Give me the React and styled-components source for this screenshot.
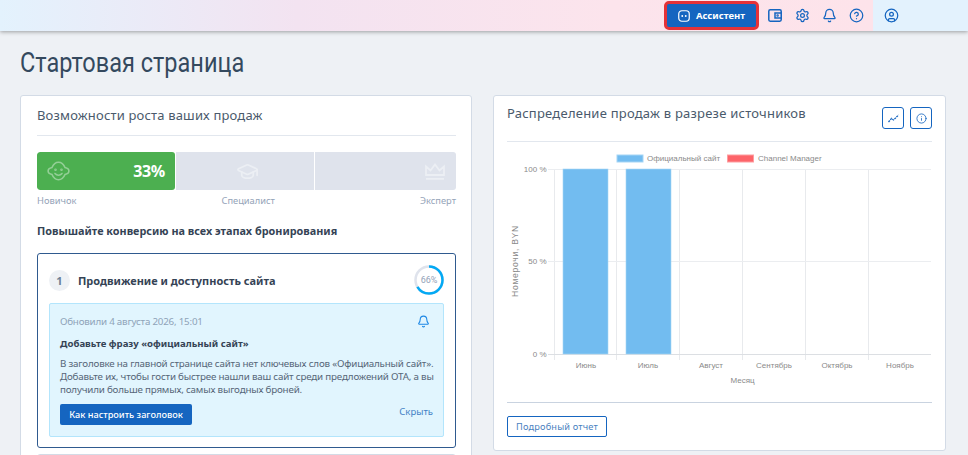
import React from 'react';
import styled, { createGlobalStyle } from 'styled-components';
import { Settings, Bell, CircleHelp, CircleUser, GraduationCap, Info } from 'lucide-react';

const Global = createGlobalStyle`
  html, body {
    margin: 0;
    height: 100%;
    overflow: hidden;
    background: #eef1f5;
    font-family: "Noto Sans", "Open Sans", sans-serif;
  }
  * { box-sizing: border-box; }
`;

const Page = styled.div`
  height: 455px;
  overflow: hidden;
`;

const Topbar = styled.header`
  display: flex;
  height: 31px;
  box-shadow: 0 1px 4px rgba(0, 0, 0, .35);
  position: relative;
`;

const TopMain = styled.div`
  flex: 1;
  display: flex;
  align-items: center;
  justify-content: flex-end;
  gap: 7px;
  padding-right: 7px;
  background: linear-gradient(90deg, #e3f2fd 0%, #f3e3f1 34%, #fce4ec 70%, #fde3ea 100%);
`;

const TopProfile = styled.div`
  width: 95px;
  display: flex;
  align-items: center;
  padding-left: 11px;
  color: #1565c0;
  background: #e3f2fd;
`;

const AssistantBtn = styled.button`
  width: 95px;
  height: 29px;
  margin-right: -1px;
  border: 3px solid #e53238;
  border-radius: 5px;
  background: #1565c0;
  color: #fff;
  font: 700 9.5px "Noto Sans", sans-serif;
  display: flex;
  align-items: center;
  justify-content: center;
  gap: 6px;
  padding: 0;
`;

const TopIcon = styled.span`
  width: 20px;
  height: 20px;
  display: flex;
  align-items: center;
  justify-content: center;
  color: #1565c0;
`;

const Title = styled.h1`
  margin: 14px 0 0 20px;
  height: 36px;
  font: 400 28px/36px Roboto, sans-serif;
  color: #34495e;
  transform: scaleX(.84);
  transform-origin: left;
`;

const Columns = styled.main`
  display: grid;
  grid-template-columns: 452px 453px;
  gap: 21px;
  padding: 14px 0 0 20px;
  align-items: start;
`;

const Card = styled.section`
  background: #fff;
  border: 1px solid #d3dbe6;
  border-radius: 3px;
`;

const LeftCard = styled(Card)`
  height: 400px;
  padding: 0 15px 0 16px;
  overflow: hidden;
`;

const RightCard = styled(Card)`
  height: 356px;
  padding: 0 13px;
`;

const LeftHead = styled.div`
  height: 40px;
  border-bottom: 1px solid #e2e7ee;
  font-size: 13px;
  line-height: 39px;
  letter-spacing: .17px;
  color: #4a5a6c;
`;

const LevelBar = styled.div`
  display: flex;
  gap: 1px;
  height: 38px;
  margin-top: 16px;
  border-radius: 3px;
  overflow: hidden;
`;

const Level = styled.div`
  width: ${p => p.$w}px;
  flex: ${p => (p.$w ? 'none' : 1)};
  display: flex;
  align-items: center;
  justify-content: ${p => p.$justify || 'center'};
  padding: ${p => p.$pad || 0};
  background: ${p => (p.$active ? '#4caf50' : '#dfe3ec')};
  border-radius: ${p => (p.$active ? '3px' : 0)};
  color: ${p => (p.$active ? 'rgba(255,255,255,.4)' : '#eceff4')};
`;

const Percent = styled.span`
  font-size: 16px;
  font-weight: 700;
  color: #fff;
  letter-spacing: -.3px;
`;

const LevelLabels = styled.div`
  display: flex;
  justify-content: space-between;
  margin-top: 4px;
  font-size: 9.3px;
  line-height: 14px;
  color: #94a3b8;
`;

const Lead = styled.h3`
  margin: 15px 0 0;
  font-size: 10.85px;
  font-weight: 700;
  line-height: 16px;
  color: #354355;
`;

const Step = styled.article`
  margin-top: 14px;
  height: 195px;
  border: 1px solid #2f5a8f;
  border-radius: 3px;
  padding: 0 11px;
`;

const StepHead = styled.div`
  display: flex;
  align-items: center;
  height: 49px;
  padding-top: 3px;
`;

const StepNum = styled.span`
  width: 21px;
  height: 21px;
  border-radius: 50%;
  background: #eef1f5;
  color: #6d8196;
  font-size: 11px;
  font-weight: 700;
  display: flex;
  align-items: center;
  justify-content: center;
  margin-right: 8px;
`;

const StepTitle = styled.span`
  flex: 1;
  font-size: 10.97px;
  font-weight: 700;
  color: #354355;
`;

const Ring = styled.svg`
  display: block;
  margin-right: -1px;
`;

const Alert = styled.div`
  height: 134px;
  background: #e1f5fe;
  border: 1px solid #b3e5fc;
  border-radius: 2px;
  padding: 9px 10px 0;
`;

const AlertTop = styled.div`
  display: flex;
  justify-content: space-between;
  align-items: center;
  height: 16px;
  padding-right: 3px;
  color: #1e88e5;
`;

const AlertDate = styled.span`
  font-size: 9.8px;
  letter-spacing: -.22px;
  color: #8fa3b8;
`;

const AlertTitle = styled.h4`
  margin: 8px 0 0;
  font-size: 9.6px;
  font-weight: 700;
  line-height: 14px;
  color: #354355;
`;

const AlertText = styled.p`
  margin: 6px 0 0;
  font-size: 9.8px;
  letter-spacing: -.2px;
  line-height: 13px;
  color: #566678;
  white-space: nowrap;
`;

const AlertFoot = styled.div`
  display: flex;
  justify-content: space-between;
  align-items: flex-start;
  margin-top: 8px;
`;

const PrimaryBtn = styled.button`
  width: 132px;
  height: 21px;
  border: 0;
  border-radius: 2px;
  background: #1565c0;
  color: #fff;
  font: 500 9.2px "Noto Sans", sans-serif;
  padding: 0;
`;

const HideLink = styled.a`
  font-size: 9.5px;
  line-height: 16px;
  color: #3f7fc4;
`;

const NextStep = styled.div`
  margin-top: 6px;
  height: 20px;
  border: 1px solid #d3dbe6;
  border-radius: 3px;
`;

const RightHead = styled.div`
  display: flex;
  justify-content: space-between;
  height: 46px;
  border-bottom: 1px solid #e2e7ee;
`;

const RightTitle = styled.h2`
  margin: 8px 0 0;
  font-size: 13px;
  font-weight: 400;
  line-height: 18px;
  letter-spacing: .23px;
  color: #4a5a6c;
`;

const HeadActions = styled.div`
  display: flex;
  gap: 6px;
  padding-top: 11px;
`;

const IconBtn = styled.button`
  width: 22px;
  height: 22px;
  padding: 0;
  border: 1px solid #1565c0;
  border-radius: 3px;
  background: #fff;
  color: #1565c0;
  display: flex;
  align-items: center;
  justify-content: center;
`;

const Chart = styled.svg`
  display: block;
  width: 425px;
  height: 260px;
  text {
    font-family: "Liberation Sans", Arial, sans-serif;
    font-size: 8px;
    fill: #8a8a8a;
  }
`;

const AxisName = styled.text`
  font-size: 8.6px !important;
  letter-spacing: .7px;
`;

const ChartFoot = styled.div`
  border-top: 1px solid #c9d3e0;
  padding-top: 13px;
`;

const OutlineBtn = styled.button`
  display: block;
  width: 100px;
  height: 21px;
  padding: 0;
  border: 1px solid #1565c0;
  border-radius: 2px;
  background: #fff;
  color: #4a7fc0;
  font: 400 9.2px "Noto Sans", sans-serif;
  letter-spacing: .17px;
`;

const WalletIcon = () => (
  <svg width="14" height="13" viewBox="0 0 14 13" fill="none" stroke="currentColor" strokeWidth="1.5">
    <rect x=".8" y=".8" width="12.4" height="11.4" rx="1.4" />
    <rect x="7" y="4" width="6.2" height="5" fill="#fde3ea" />
    <circle cx="9.6" cy="6.5" r=".5" />
  </svg>
);

const BotIcon = () => (
  <svg width="12" height="12" viewBox="0 0 13 13" fill="none">
    <rect x=".8" y=".8" width="11.4" height="11.4" rx="3.4" stroke="#fff" strokeWidth="1.3" />
    <circle cx="4.6" cy="6.5" r="1" fill="#fff" />
    <circle cx="8.4" cy="6.5" r="1" fill="#fff" />
  </svg>
);

const BabyIcon = () => (
  <svg width="23" height="20" viewBox="0 0 23 20" fill="none" stroke="currentColor" strokeWidth="1.6" strokeLinecap="round">
    <path d="M5 6.5C6.4 3.2 8.8 1.3 11.5 1.3S16.6 3.2 18 6.5c2.1.5 3.9 1.8 3.9 3.5S20.1 13 18 13.5c-1.4 3.3-3.8 5.2-6.5 5.2S6.4 16.8 5 13.5C2.9 13 1.1 11.7 1.1 10S2.9 7 5 6.5Z" />
    <path d="M8 12.5c1.8 2.3 5.2 2.3 7 0" />
    <circle cx="8.5" cy="8.8" r=".5" />
    <circle cx="14.5" cy="8.8" r=".5" />
  </svg>
);

const CrownIcon = () => (
  <svg width="20" height="17" viewBox="0 0 20 17" fill="none" stroke="currentColor" strokeWidth="1.8">
    <path d="M1 3.5 5.500 7.500 10 1.500 14.500 7.500 19 3.500V12H1Z" />
    <path d="M1 15.800H19" />
  </svg>
);

const TrendIcon = () => (
  <svg width="11" height="9" viewBox="0 0 11 9" fill="none" stroke="currentColor" strokeWidth="1.3">
    <path d="M.5 8 3.500 4.500 5.500 6 10.500 1" strokeDasharray="2 .8" />
  </svg>
);

const cols = [554.5, 616.5, 679.5, 742.5, 805.5, 868.5, 931.5];
const months = ['Июнь', 'Июль', 'Август', 'Сентябрь', 'Октябрь', 'Ноябрь'];
const ticks = [['100 %', 169.5], ['50 %', 261.5], ['0 %', 354.5]];
const bars = [563, 626];

const SalesChart = () => (
  <Chart viewBox="507 142 425 260">
    <rect x="617" y="155" width="26" height="7" fill="#72bcf0" stroke="#a6d5f5" />
    <text x="647" y="161">Официальный сайт</text>
    <rect x="727.5" y="155" width="26" height="7" fill="#fd6469" stroke="#fd9da0" />
    <text x="758" y="161">Channel Manager</text>
    {cols.slice(0, -1).map(x => (
      <line key={x} x1={x} x2={x} y1="169" y2="360" stroke="#e8eaed" />
    ))}
    {ticks.map(([label, y]) => (
      <g key={label}>
        <line x1="548" x2="931" y1={y} y2={y} stroke={y > 300 ? '#dcdfe3' : '#ebedf0'} />
        <text x="546.5" y={y + 2} textAnchor="end">{label}</text>
      </g>
    ))}
    {bars.map(x => (
      <rect key={x} x={x} y="169" width="45" height="185" fill="#72bcf0" stroke="#a6d5f5" strokeWidth=".6" />
    ))}
    {months.map((m, i) => (
      <text key={m} x={cols[i] + 31.5} y="368" textAnchor="middle">{m}</text>
    ))}
    <text x="742.5" y="383" textAnchor="middle">Месяц</text>
    <AxisName transform="translate(517.5 261) rotate(-90)" textAnchor="middle">Номерочи, BYN</AxisName>
  </Chart>
);

export default function App() {
  return (
    <Page>
      <Global />
      <Topbar>
        <TopMain>
          <AssistantBtn><BotIcon />Ассистент</AssistantBtn>
          <TopIcon><WalletIcon /></TopIcon>
          <TopIcon><Settings size={15} strokeWidth={2} /></TopIcon>
          <TopIcon><Bell size={15} strokeWidth={2} /></TopIcon>
          <TopIcon><CircleHelp size={15} strokeWidth={2} /></TopIcon>
        </TopMain>
        <TopProfile><CircleUser size={15} strokeWidth={2} /></TopProfile>
      </Topbar>
      <Title>Стартовая страница</Title>
      <Columns>
        <LeftCard>
          <LeftHead>Возможности роста ваших продаж</LeftHead>
          <LevelBar>
            <Level $active $w={138} $justify="space-between" $pad="0 10px 0 10px">
              <BabyIcon />
              <Percent>33%</Percent>
            </Level>
            <Level $w={138} $pad="0 0 0 5px"><GraduationCap size={23} strokeWidth={1.8} /></Level>
            <Level $justify="flex-end" $pad="0 11px 0 0"><CrownIcon /></Level>
          </LevelBar>
          <LevelLabels>
            <span>Новичок</span>
            <span>Специалист</span>
            <span>Эксперт</span>
          </LevelLabels>
          <Lead>Повышайте конверсию на всех этапах бронирования</Lead>
          <Step>
            <StepHead>
              <StepNum>1</StepNum>
              <StepTitle>Продвижение и доступность сайта</StepTitle>
              <Ring width="32" height="32" viewBox="0 0 32 32">
                <circle cx="16" cy="16" r="13.5" fill="none" stroke="#dfe3ec" strokeWidth="2.5" />
                <circle cx="16" cy="16" r="13.5" fill="none" stroke="#03a9f4" strokeWidth="2.5" strokeDasharray="56 84.8" transform="rotate(-90 16 16)" />
                <text x="16" y="19" textAnchor="middle" fontSize="9" fill="#94a3b8" fontFamily="Roboto, sans-serif">66%</text>
              </Ring>
            </StepHead>
            <Alert>
              <AlertTop>
                <AlertDate>Обновили 4 августа 2026, 15:01</AlertDate>
                <Bell size={13} strokeWidth={2} />
              </AlertTop>
              <AlertTitle>Добавьте фразу «официальный сайт»</AlertTitle>
              <AlertText>
                В заголовке на главной странице сайта нет ключевых слов «Официальный сайт».<br />
                Добавьте их, чтобы гости быстрее нашли ваш сайт среди предложений ОТА, а вы<br />
                получили больше прямых, самых выгодных броней.
              </AlertText>
              <AlertFoot>
                <PrimaryBtn>Как настроить заголовок</PrimaryBtn>
                <HideLink>Скрыть</HideLink>
              </AlertFoot>
            </Alert>
          </Step>
          <NextStep />
        </LeftCard>
        <RightCard>
          <RightHead>
            <RightTitle>Распределение продаж в разрезе источников</RightTitle>
            <HeadActions>
              <IconBtn><TrendIcon /></IconBtn>
              <IconBtn><Info size={11} strokeWidth={1.8} /></IconBtn>
            </HeadActions>
          </RightHead>
          <SalesChart />
          <ChartFoot>
            <OutlineBtn>Подробный отчет</OutlineBtn>
          </ChartFoot>
        </RightCard>
      </Columns>
    </Page>
  );
}
